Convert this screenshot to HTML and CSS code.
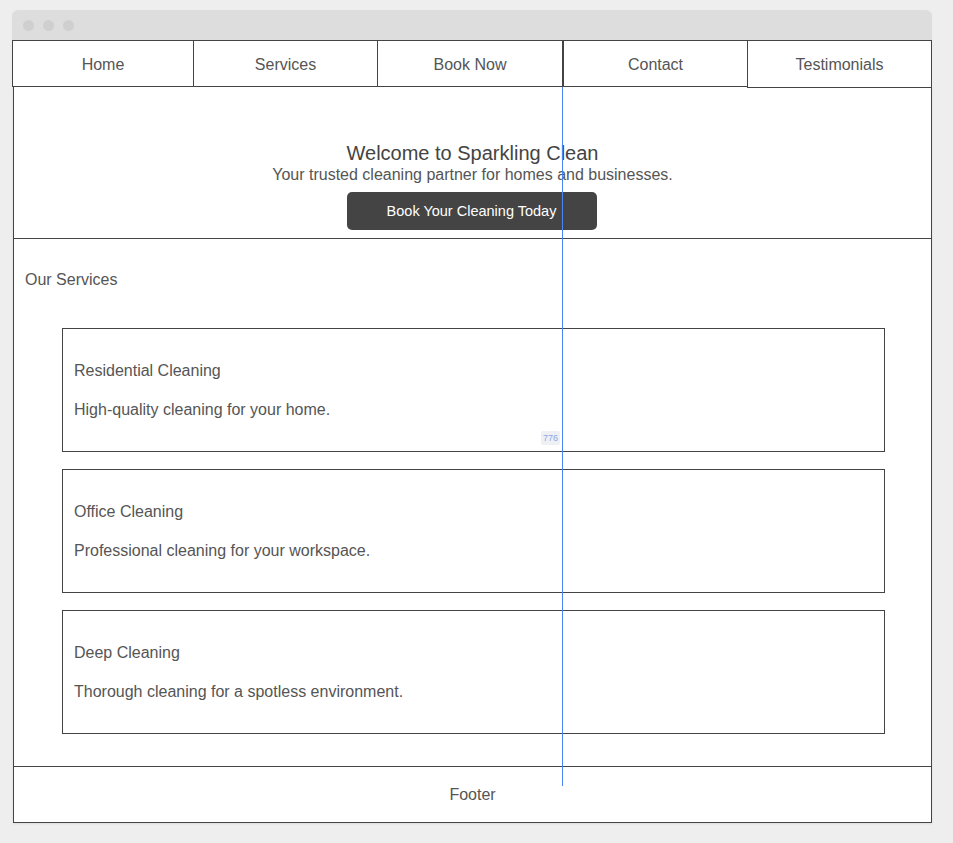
FILE: index.html
```html
<!DOCTYPE html>
<html>
<head>
<meta charset="utf-8">
<link rel="stylesheet" href="styles.css">
</head>
<body>
<div class="window">
  <div class="titlebar">
    <span class="dot"></span><span class="dot"></span><span class="dot"></span>
  </div>
  <nav class="nav">
    <a class="nav-item nav-first">Home</a>
    <a class="nav-item nav-services">Services</a>
    <a class="nav-item">Book Now</a>
    <a class="nav-item nav-contact">Contact</a>
    <a class="nav-item nav-last">Testimonials</a>
  </nav>
  <div class="page">
    <section class="hero">
      <h1 class="hero-title">Welcome to Sparkling Clean</h1>
      <p class="hero-sub">Your trusted cleaning partner for homes and businesses.</p>
      <button class="hero-btn">Book Your Cleaning Today</button>
    </section>
    <section class="services">
      <h2 class="services-title">Our Services</h2>
      <div class="cards">
        <div class="card">
          <h3 class="card-title">Residential Cleaning</h3>
          <p class="card-desc">High-quality cleaning for your home.</p>
        </div>
        <div class="card">
          <h3 class="card-title">Office Cleaning</h3>
          <p class="card-desc">Professional cleaning for your workspace.</p>
        </div>
        <div class="card">
          <h3 class="card-title">Deep Cleaning</h3>
          <p class="card-desc">Thorough cleaning for a spotless environment.</p>
        </div>
      </div>
    </section>
    <footer class="footer">Footer</footer>
    <div class="guide"></div>
    <div class="guide-label">776</div>
  </div>
</div>
</body>
</html>
```

FILE: styles.css
```css
* { box-sizing: border-box; }
html, body { margin: 0; padding: 0; }
body {
  background: #eeeeee;
  font-family: "Liberation Sans", Arial, sans-serif;
  color: #555555;
  width: 953px;
  height: 843px;
  overflow: hidden;
}
.window {
  margin: 10px 0 0 12px;
  width: 920px;
}
.titlebar {
  height: 30px;
  background: #dddddd;
  border-radius: 6px 6px 0 0;
  display: flex;
  align-items: center;
  padding-left: 11px;
  gap: 9px;
}
.dot {
  width: 11px;
  height: 11px;
  border-radius: 50%;
  background: #cfcfcf;
}
.nav {
  display: flex;
  align-items: flex-start;
  height: 47px;
  background: #ffffff;
}
.nav-item {
  display: flex;
  align-items: center;
  justify-content: center;
  flex: none;
  width: 186px;
  height: 47px;
  border: 1px solid #444444;
  margin-left: -1px;
  font-size: 16px;
  color: #555555;
  padding-top: 2px;
}
.nav-first { margin-left: 0; width: 182px; }
.nav-services { width: 185px; }
.nav-contact { border-left-width: 2px; }
.nav-last {
  width: 185px;
  height: 48px;
  position: relative;
  z-index: 1;
  padding-top: 1px;
}
.page {
  position: relative;
  margin-left: 1px;
  width: 919px;
  background: #ffffff;
  border: 1px solid #444444;
  border-top: none;
  box-shadow: 0 1px 2px rgba(0,0,0,0.08);
}
.hero {
  text-align: center;
  padding: 54px 0 8px;
  border-bottom: 1px solid #444444;
}
.hero-title {
  margin: 0;
  font-size: 20px;
  line-height: 24px;
  font-weight: normal;
  color: #444444;
}
.hero-sub {
  margin: 0;
  font-size: 16px;
  line-height: 20px;
}
.hero-btn {
  margin-top: 7px;
  width: 250px;
  height: 38px;
  background: #444444;
  color: #ffffff;
  border: none;
  border-radius: 5px;
  font-family: "Liberation Sans", Arial, sans-serif;
  font-size: 14.5px;
  padding: 0;
  margin-left: -2px;
}
.services {
  padding: 31px 0 32px;
}
.services-title {
  margin: 0 0 38px 11px;
  font-size: 16px;
  line-height: 20px;
  font-weight: normal;
}
.cards {
  display: flex;
  flex-direction: column;
  gap: 17px;
  padding: 0 46px 0 48px;
}
.card {
  border: 1px solid #444444;
  height: 124px;
  padding: 33px 11px 0;
}
.card-title {
  margin: 0;
  font-size: 16px;
  line-height: 18px;
  font-weight: normal;
}
.card-desc {
  margin: 21px 0 0;
  font-size: 16px;
  line-height: 18px;
}
.footer {
  border-top: 1px solid #444444;
  height: 56px;
  display: flex;
  align-items: center;
  justify-content: center;
  font-size: 16px;
  padding-top: 0;
}
.guide {
  position: absolute;
  left: 548px;
  top: 0;
  width: 1px;
  height: 699px;
  background: #4a86f0;
}
.guide-label {
  position: absolute;
  left: 527px;
  top: 344px;
  width: 19px;
  height: 14px;
  background: #eef0f4;
  border-radius: 2px;
  color: #8fa6e6;
  font-size: 9px;
  line-height: 14px;
  text-align: center;
}
```
